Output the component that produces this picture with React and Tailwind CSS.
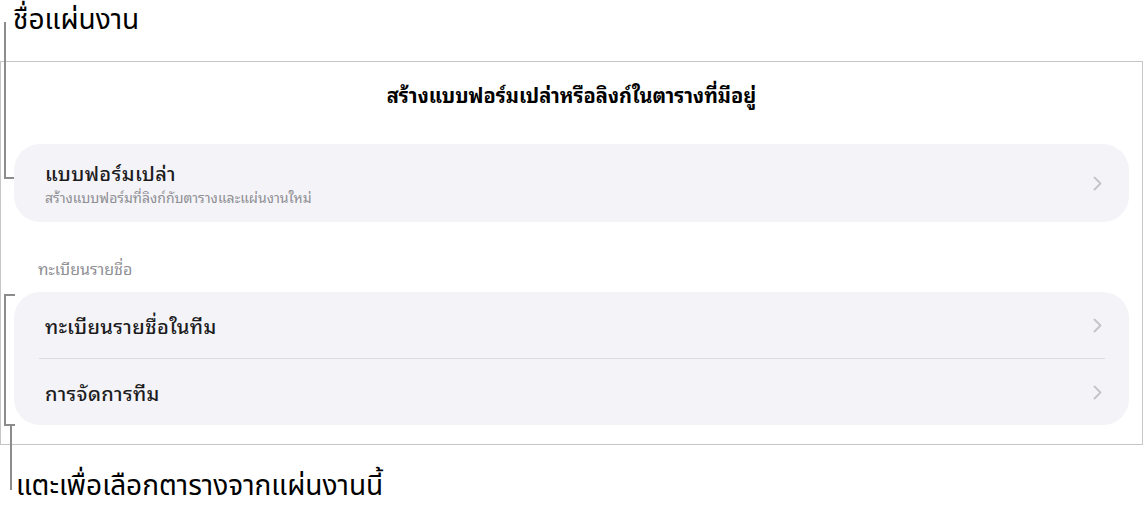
import React from 'react';

// annotation labels use the plain Thai face, the panel uses a looped one
const LABEL_FONT = "font-['Noto_Sans_Thai','Noto_Sans',sans-serif]";
const UI_FONT = "font-['Noto_Sans_Thai_Looped','Loma','Garuda','Waree','Norasi','Noto_Sans_Thai',sans-serif]";

const Chevron = () => (
  <svg width="9" height="15" viewBox="0 0 9 15" fill="none" className="shrink-0">
    <path d="M1.5 1.5 L7.5 7.5 L1.5 13.5" stroke="#c4c4c8" strokeWidth="1.8" strokeLinecap="round" strokeLinejoin="round" />
  </svg>
);

const Row = ({ title, subtitle, height }) => (
  <div className={`flex items-center justify-between pl-[31px] pr-[27px] ${height}`}>
    <div className="flex flex-col">
      <span className="text-[20px] leading-[26px] tracking-[0.4px] font-medium text-[#1c1c1e]">{title}</span>
      {subtitle && (
        <span className="text-[14px] leading-[20px] text-[#8e8e93] mt-[2px]">{subtitle}</span>
      )}
    </div>
    <Chevron />
  </div>
);

export default function App() {
  return (
    <div className="relative w-[1144px] h-[516px] bg-white overflow-hidden">
      {/* sheet name label */}
      <div className={`h-[61px] pl-[13px] pt-[2px] text-[28px] leading-[38px] text-black ${LABEL_FONT}`}>ชื่อแผ่นงาน</div>

      {/* form picker panel */}
      <div className={`w-[1143px] h-[384px] border border-[#c6c6c6] flex flex-col ${UI_FONT}`}>
        <h1 className="pt-[19px] text-center text-[20px] leading-[26px] font-bold text-black">
          สร้างแบบฟอร์มเปล่าหรือลิงก์ในตารางที่มีอยู่
        </h1>

        <div className="mt-[37px] mx-[13px] h-[78px] rounded-[26px] bg-[#f4f4f8] flex flex-col justify-center">
          <Row
            title="แบบฟอร์มเปล่า"
            subtitle="สร้างแบบฟอร์มที่ลิงก์กับตารางและแผ่นงานใหม่"
            height="h-[78px]"
          />
        </div>

        <div className="mt-[36px] pl-[37px] text-[16px] leading-[21px] text-[#8e8e93]">ทะเบียนรายชื่อ</div>

        <div className="mt-[13px] mx-[13px] rounded-[26px] bg-[#f4f4f8] flex flex-col">
          <Row title="ทะเบียนรายชื่อในทีม" height="h-[66px]" />
          <div className="ml-[25px] mr-[24px] h-px bg-[#dcdce0]" />
          <Row title="การจัดการทีม" height="h-[66px]" />
        </div>
      </div>

      {/* table hint label */}
      <div className={`pl-[16px] pt-[23px] text-[28px] leading-[38px] text-black ${LABEL_FONT}`}>แตะเพื่อเลือกตารางจากแผ่นงานนี้</div>

      {/* callout lines */}
      <div className="absolute left-[4px] top-[22px] w-[2px] h-[157px] bg-[#8c8c8c]" />
      <div className="absolute left-[4px] top-[177px] w-[10px] h-[2px] bg-[#8c8c8c]" />

      <div className="absolute left-[4px] top-[294px] w-[2px] h-[132px] bg-[#8c8c8c]" />
      <div className="absolute left-[4px] top-[294px] w-[11px] h-[2px] bg-[#8c8c8c]" />
      <div className="absolute left-[4px] top-[424px] w-[11px] h-[2px] bg-[#8c8c8c]" />
      <div className="absolute left-[10px] top-[424px] w-[2px] h-[66px] bg-[#8c8c8c]" />
    </div>
  );
}
